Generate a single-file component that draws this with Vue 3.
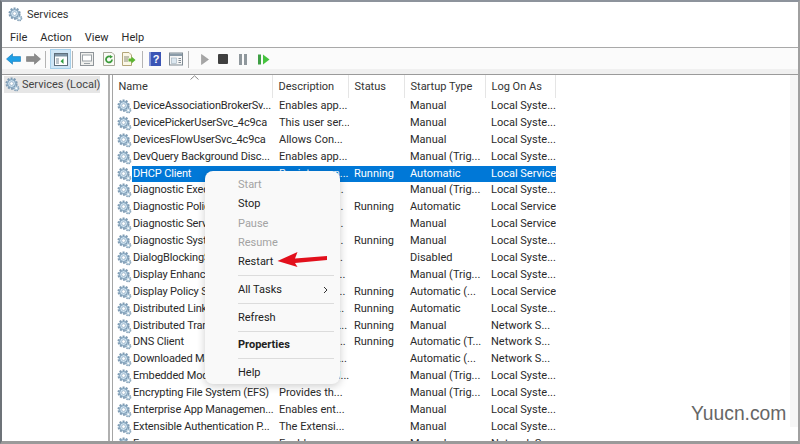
<template>
  <div class="window">
    <svg class="defs" aria-hidden="true">
      <symbol id="gear" viewBox="0 0 16 16">
        <circle cx="7" cy="7" r="5.4" fill="#b5d0e2" stroke="#7f9bb3" stroke-width="2.2" stroke-dasharray="2 1.4" />
        <circle cx="7" cy="7" r="4.2" fill="#cfe3f0" stroke="#6e8fab" stroke-width="0.8" />
        <circle cx="7" cy="7" r="2" fill="#fff" stroke="#86a2ba" stroke-width="0.7" />
        <circle cx="12" cy="12" r="2.6" fill="#c2d8e6" stroke="#7f9bb3" stroke-width="1.5" stroke-dasharray="1.4 0.9" />
        <circle cx="12" cy="12" r="0.9" fill="#fff" />
      </symbol>
    </svg>

    <header class="titlebar">
      <svg class="title-icon"><use href="#gear" /></svg>
      <span>Services</span>
    </header>

    <nav class="menubar">
      <span v-for="item in menus" :key="item">{{ item }}</span>
    </nav>

    <div class="toolbar">
      <svg class="tool arrow" viewBox="0 0 15 12">
        <path d="M0.5 6 6.5 0.8V3.6H14.5V8.4H6.5V11.2Z" fill="#1e9fe6" stroke="#1478b8" stroke-width="0.6" />
      </svg>
      <svg class="tool arrow fwd" viewBox="0 0 15 12">
        <path d="M14.5 6 8.500 0.8V3.6H0.5V8.4H8.500V11.200Z" fill="#8b8b8b" stroke="#777" stroke-width="0.6" />
      </svg>
      <i class="sep first"></i>
      <button class="active-btn">
        <svg viewBox="0 0 14 13" width="14" height="13">
          <rect x="0.500" y="0.500" width="13" height="12" fill="#fff" stroke="#5f6f7c" />
          <rect x="1" y="1" width="12" height="2.500" fill="#7f95a6" />
          <path d="M9.500 5.500V11L6.500 8.200Z" fill="#2f9e3f" />
          <path d="M2 6H5M2 8H5M2 10H5" stroke="#7b8a96" />
        </svg>
      </button>
      <i class="sep"></i>
      <svg class="tool doc one" viewBox="0 0 14 14">
        <rect x="0.500" y="0.500" width="13" height="13" fill="#f0f0ee" stroke="#8e9499" />
        <rect x="2.500" y="3" width="9" height="6" fill="#fff" stroke="#9aa1a6" />
        <path d="M4 11.500H10" stroke="#9aa1a6" />
      </svg>
      <svg class="tool doc two" viewBox="0 0 14 14">
        <path d="M1.500 0.500H10L12.500 3V13.500H1.500Z" fill="#fbfbf6" stroke="#a9a99a" />
        <path d="M10 7.500A3 3 0 1 1 8.500 4.800" fill="none" stroke="#3c9c3c" stroke-width="1.800" />
        <path d="M8 3 11 4.800 8 6.500Z" fill="#3c9c3c" />
      </svg>
      <svg class="tool doc three" viewBox="0 0 15 14">
        <path d="M1.500 0.500H8L10.500 3V13.500H1.500Z" fill="#fbf7e6" stroke="#b3a67a" />
        <path d="M3 5H8M3 7H7M3 9H7" stroke="#8a8a78" />
        <path d="M7.500 6.500H10.500V4.500L14.500 8 10.500 11.500V9.500H7.500Z" fill="#5cb531" />
      </svg>
      <i class="sep"></i>
      <svg class="tool help" viewBox="0 0 12 14">
        <rect width="12" height="14" fill="#3b55b5" />
        <rect width="2" height="14" fill="#8495d6" />
        <text x="7" y="11" text-anchor="middle" class="help-text">?</text>
      </svg>
      <svg class="tool doc four" viewBox="0 0 14 13">
        <rect x="0.500" y="0.500" width="13" height="12" fill="#f6f6f6" stroke="#7f8a92" />
        <rect x="1" y="1" width="12" height="2.500" fill="#8a9ba8" />
        <rect x="2.500" y="5.500" width="5" height="5.500" fill="#dce7ef" stroke="#9fb0bc" stroke-width="0.600" />
        <path d="M9.500 6H12M9.500 8H12M9.500 10H12" stroke="#7f8a92" />
      </svg>
      <i class="sep"></i>
      <svg class="tool play" viewBox="0 0 8 11"><path d="M0.500 0.500 7.500 5.500 0.500 10.500Z" fill="#a6a6a6" stroke="#8a8a8a" stroke-width="0.500" /></svg>
      <span class="stop"></span>
      <span class="pause"><i></i><i></i></span>
      <svg class="tool resume" viewBox="0 0 12 11">
        <rect x="0" y="0.500" width="3" height="10" fill="#3f9f45" />
        <path d="M5 0.500 11.500 5.500 5 10.500Z" fill="#46c33f" />
      </svg>
    </div>
    <div class="toolbar-foot"></div>

    <main class="panes">
      <aside class="tree">
        <div class="tree-item">
          <svg class="gear"><use href="#gear" /></svg>
          <span>Services (Local)</span>
        </div>
      </aside>
      <section class="list">
        <div class="list-inner">
          <div class="row head">
            <span v-for="col in columns" :key="col" class="cell">{{ col }}</span>
            <svg class="sort" viewBox="0 0 9 5"><path d="M0.500 4.500 4.500 0.800 8.500 4.500" fill="none" stroke="#8a8a8a" /></svg>
          </div>
          <div v-for="svc in services" :key="svc[0]" class="row" :class="{ selected: svc[0] === 'DHCP Client' }">
            <svg class="gear"><use href="#gear" /></svg>
            <span class="cell name">{{ svc[0] }}</span>
            <span class="cell">{{ svc[1] }}</span>
            <span class="cell">{{ svc[2] }}</span>
            <span class="cell">{{ svc[3] }}</span>
            <span class="cell">{{ svc[4] }}</span>
          </div>
        </div>
        <div class="scroll-track"></div>
      </section>
    </main>

    <ul class="context">
      <template v-for="item in contextItems" :key="item.label">
        <li :class="{ off: item.off, strong: item.strong }">
          <span>{{ item.label }}</span>
          <svg v-if="item.more" class="chev" viewBox="0 0 5 8"><path d="M1 1 4 4 1 7" fill="none" stroke="#333" /></svg>
        </li>
        <li v-if="item.line" class="rule"></li>
      </template>
    </ul>

    <svg class="red-arrow" viewBox="0 0 50 17">
      <path d="M50 5 18 7.500 20.500 1 0.500 10 20.500 16 18 12 50 9Z" fill="#e2101c" />
    </svg>

    <div class="watermark">Yuucn.com</div>
  </div>
</template>

<script setup>
const menus = ['File', 'Action', 'View', 'Help']
const columns = ['Name', 'Description', 'Status', 'Startup Type', 'Log On As']

const services = [
  ['DeviceAssociationBrokerSv...', 'Enables app...', '', 'Manual', 'Local Syste...'],
  ['DevicePickerUserSvc_4c9ca', 'This user ser...', '', 'Manual', 'Local Syste...'],
  ['DevicesFlowUserSvc_4c9ca', 'Allows Con...', '', 'Manual', 'Local Syste...'],
  ['DevQuery Background Disc...', 'Enables app...', '', 'Manual (Trig...', 'Local Syste...'],
  ['DHCP Client', 'Registers an...', 'Running', 'Automatic', 'Local Service'],
  ['Diagnostic Execution Ser...', 'Executes di...', '', 'Manual (Trig...', 'Local Syste...'],
  ['Diagnostic Policy Service', 'The Diagno...', 'Running', 'Automatic', 'Local Service'],
  ['Diagnostic Service Host', 'The Diagno...', '', 'Manual', 'Local Service'],
  ['Diagnostic System Host', 'The Diagno...', 'Running', 'Manual', 'Local Syste...'],
  ['DialogBlockingService', 'Dialog Bloc...', '', 'Disabled', 'Local Syste...'],
  ['Display Enhancement Ser...', 'A service fo...', '', 'Manual (Trig...', 'Local Syste...'],
  ['Display Policy Service', 'Manages th...', 'Running', 'Automatic (...', 'Local Service'],
  ['Distributed Link Tracking...', 'Maintains li...', 'Running', 'Automatic', 'Local Syste...'],
  ['Distributed Transaction C...', 'Coordinates...', 'Running', 'Manual', 'Network S...'],
  ['DNS Client', 'The DNS Cli...', 'Running', 'Automatic (T...', 'Network S...'],
  ['Downloaded Maps Manager', 'Windows se...', '', 'Automatic (...', 'Network S...'],
  ['Embedded Mode', 'The Embedd...', '', 'Manual (Trig...', 'Local Syste...'],
  ['Encrypting File System (EFS)', 'Provides th...', '', 'Manual (Trig...', 'Local Syste...'],
  ['Enterprise App Managemen...', 'Enables ent...', '', 'Manual', 'Local Syste...'],
  ['Extensible Authentication P...', 'The Extensi...', '', 'Manual', 'Local Syste...'],
  ['Fax', 'Enables you...', '', 'Manual', 'Network S...'],
]

const contextItems = [
  { label: 'Start', off: true },
  { label: 'Stop' },
  { label: 'Pause', off: true },
  { label: 'Resume', off: true },
  { label: 'Restart', line: true },
  { label: 'All Tasks', more: true, line: true },
  { label: 'Refresh', line: true },
  { label: 'Properties', strong: true, line: true },
  { label: 'Help' },
]
</script>

<style>
html,
body {
  margin: 0;
  background: #fff;
}
</style>

<style scoped>
.window {
  position: relative;
  width: 800px;
  height: 444px;
  box-sizing: border-box;
  display: flex;
  flex-direction: column;
  overflow: hidden;
  background: #fff;
  border-top: 2px solid #8d939c;
  border-left: 2px solid #6d7378;
  border-right: 2px solid #a0a0a0;
  border-bottom: 3px solid #9a9a9a;
  font-family: Roboto, sans-serif;
  font-size: 11px;
  color: #2a2a2a;
}
.defs {
  position: absolute;
  width: 0;
  height: 0;
}

.titlebar {
  height: 25px;
  flex: none;
  display: flex;
  align-items: center;
  gap: 4px;
  padding-left: 6px;
  color: #333;
}
.title-icon {
  width: 15px;
  height: 15px;
}

.menubar {
  height: 19px;
  flex: none;
  display: flex;
  align-items: center;
  gap: 13px;
  padding: 1px 0 0 8px;
  border-bottom: 1px solid #a9a9a9;
  box-sizing: content-box;
}

.toolbar {
  height: 20px;
  flex: none;
  display: flex;
  align-items: center;
  padding-top: 1px;
  background: #fbfbfb;
}
.toolbar svg {
  flex: none;
}
.tool.arrow {
  width: 15px;
  height: 12px;
  margin-left: 4px;
}
.tool.fwd {
  margin-left: 5px;
}
.sep {
  width: 1px;
  height: 17px;
  background: #b4b4b4;
  flex: none;
  margin: 0 6px 0 7px;
}
.sep.first {
  margin: 0 4px 0 4px;
}
.active-btn {
  width: 21px;
  height: 20px;
  flex: none;
  padding: 0;
  display: flex;
  align-items: center;
  justify-content: center;
  background: #cfe6f6;
  border: 1px solid #a5cfea;
  margin-right: -5px;
}
.active-btn + .sep {
  margin-left: 6px;
}
.doc {
  width: 14px;
  height: 14px;
}
.doc.one {
  margin-left: 1px;
}
.doc.two {
  margin-left: 8px;
}
.doc.three {
  width: 15px;
  margin-left: 5px;
  margin-right: -1px;
}
.help {
  width: 12px;
  height: 14px;
  margin-left: 0;
}
.help-text {
  font: bold 11px "Liberation Sans", sans-serif;
  fill: #fff;
}
.doc.four {
  margin-left: 8px;
  margin-right: -2px;
}
.play {
  width: 8px;
  height: 11px;
  margin-left: 6px;
}
.stop {
  width: 10px;
  height: 10px;
  flex: none;
  margin-left: 9px;
  background: #3f3f3f;
  border-radius: 1px;
}
.pause {
  flex: none;
  display: flex;
  gap: 2px;
  margin-left: 11px;
}
.pause i {
  width: 3px;
  height: 11px;
  background: #8f979c;
}
.resume {
  width: 12px;
  height: 11px;
  margin-left: 11px;
}
.toolbar-foot {
  height: 5px;
  flex: none;
  background: #f0f0f0;
  border-bottom: 1px solid #9a9a9a;
  box-sizing: content-box;
}

.panes {
  flex: 1;
  min-height: 0;
  display: flex;
}
.tree {
  width: 106px;
  flex: none;
  border-right: 2px solid #b0b0b0;
  box-sizing: content-box;
}
.tree-item {
  margin: 1px 0 0 2px;
  width: 96px;
  height: 17px;
  display: flex;
  align-items: center;
  gap: 2px;
  padding-left: 1px;
  box-sizing: border-box;
  background: #e6e6e6;
  white-space: nowrap;
  color: #444;
}
.list {
  flex: 1;
  min-width: 0;
  display: flex;
  margin-left: 2px;
  border-left: 1px solid #a5a5a5;
}
.list-inner {
  flex: 1;
  min-width: 0;
  overflow: hidden;
}
.scroll-track {
  width: 8px;
  flex: none;
  margin-bottom: 14px;
  background: #f6f6f6;
}

.row {
  width: 443px;
  height: 16.900px;
  display: grid;
  grid-template-columns: 15px 142px 75px 56px 81px 70px;
  align-items: center;
  padding-left: 4px;
  line-height: 16.900px;
}
.head {
  position: relative;
  height: 23px;
  line-height: 23px;
  grid-template-columns: 160px 76px 56px 81px 70px;
  padding-left: 0;
  color: #333;
}
.head .cell {
  padding-left: 5.500px;
  border-right: 1px solid #e5e5e5;
  box-sizing: border-box;
  height: 23px;
}
.sort {
  position: absolute;
  left: 77px;
  top: 0;
  width: 9px;
  height: 5px;
}
.cell {
  white-space: nowrap;
  overflow: hidden;
  padding-left: 5px;
}
.cell.name {
  padding-left: 1px;
  letter-spacing: -0.150px;
}
.gear {
  width: 15px;
  height: 15px;
  flex: none;
}
.selected .cell {
  background: #0078d7;
  color: #fff;
  height: 16.900px;
}

.context {
  position: absolute;
  left: 203px;
  top: 169px;
  width: 135px;
  height: 213px;
  box-sizing: border-box;
  margin: 0;
  padding: 4px 0 0;
  list-style: none;
  background: #f9f9f9;
  border-radius: 8px;
  box-shadow: 0 2px 8px rgba(0, 0, 0, 0.2);
}
.context li {
  height: 19.300px;
  display: flex;
  align-items: center;
  justify-content: space-between;
  padding: 0 12px 0 33px;
  color: #222;
}
.context li.off {
  color: #a3a3a3;
}
.context li.strong {
  font-weight: 700;
}
.context li.rule {
  height: 1px;
  margin: 3.700px 6px 3.700px 33px;
  padding: 0;
  background: #dcdcdc;
}
.chev {
  width: 5px;
  height: 8px;
}
.red-arrow {
  position: absolute;
  left: 275px;
  top: 249px;
  width: 50px;
  height: 17px;
}
.watermark {
  position: absolute;
  left: 689px;
  top: 401px;
  font-family: "Liberation Sans", sans-serif;
  font-size: 19.300px;
  color: #666;
}
</style>
